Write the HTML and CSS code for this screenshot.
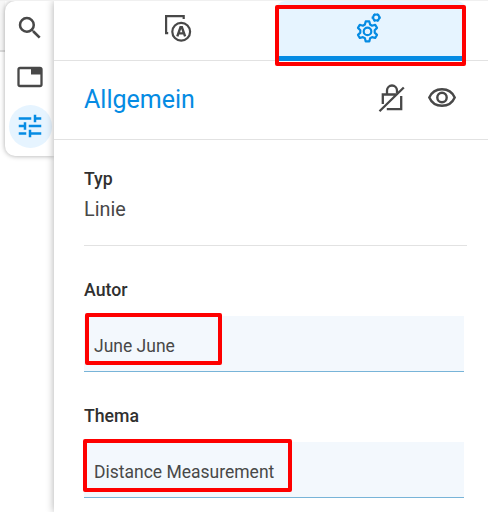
FILE: index.html
```html
<!DOCTYPE html>
<html lang="de">
<head>
<meta charset="utf-8">
<title>Allgemein</title>
<link rel="stylesheet" href="styles.css">
</head>
<body>
<div class="app">
  <aside class="gutter">
    <div class="canvas-edge"></div>
    <nav class="rail">
      <button class="rail-item" aria-label="Suche"><svg width="30" height="30" viewBox="0 0 24 24"><path fill="currentColor" d="M15.500 14h-.79l-.28-.27A6.470 6.470 0 0 0 16 9.500 6.500 6.500 0 1 0 9.500 16c1.610 0 3.090-.59 4.230-1.570l.27.28v.79l5 4.990L20.490 19zm-6 0a4.500 4.500 0 1 1 0-9 4.500 4.500 0 0 1 0 9z"/></svg></button>
      <button class="rail-item" aria-label="Ansichten"><svg width="28" height="28" viewBox="0 0 28 28"><rect x="2.500" y="5" width="23" height="18" rx="1.600" fill="none" stroke="currentColor" stroke-width="2.300"/><path fill="currentColor" d="M15 5h10.500v6.500H15z"/></svg></button>
      <button class="rail-item active" aria-label="Eigenschaften"><svg width="30" height="30" viewBox="0 0 24 24"><path fill="currentColor" d="M3 17v2h6v-2H3zM3 5v2h10V5H3zm10 16v-2h8v-2h-8v-2h-2v6h2zM7 9v2H3v2h4v2h2V9H7zm14 4v-2H11v2h10zm-6-4h2V7h4V5h-4V3h-2v6z"/></svg></button>
    </nav>
  </aside>
  <main class="panel">
    <div class="tabs">
      <button class="tab" aria-label="Darstellung"><svg width="30" height="30" viewBox="0 0 30 30" fill="none" stroke="currentColor"><path stroke-width="2.200" d="M6.200 21.200H4.100V4.100h17.600v3"/><circle cx="19.200" cy="19.700" r="8.900" stroke-width="2.200"/><path stroke-width="2.400" d="M15.300 24.300l3.200-9h1.400l3.200 9M16.500 21.400h5.400"/></svg></button>
      <button class="tab selected" aria-label="Einstellungen"><svg width="30" height="36" viewBox="0 0 30 36" fill="none" stroke="currentColor" stroke-linejoin="round"><path stroke-width="2.200" d="M11.700 13.400h3.600l.8 3.100 2 1.200 3.100-.9 1.800 3.100-2.300 2.300v2.400l2.300 2.300-1.800 3.100-3.100-.9-2 1.200-.8 3.100h-3.600l-.8-3.100-2-1.200-3.100.9-1.800-3.100 2.300-2.300v-2.400l-2.300-2.300 1.800-3.100 3.100.9 2-1.200z"/><circle cx="13.500" cy="23.400" r="3.800" stroke-width="2.200"/><circle cx="22.200" cy="9.600" r="3" stroke-width="2"/><path stroke-width="2.200" d="M20 5.700l.9 1.500M24.400 5.700l-.9 1.500M17.600 9.600h1.500M25.300 9.600h1.500M20 13.500l.9-1.500M24.400 13.500l-.9-1.500"/></svg><span class="mark mark-tab"></span></button>
    </div>
    <header class="heading">
      <h1>Allgemein</h1>
      <button class="action" aria-label="Entsperrt"><svg width="30" height="30" viewBox="0 0 30 30" fill="none" stroke="currentColor" stroke-width="2.300"><path d="M5.800 21V11.500H20M24.200 13v13.200H9.800M10 11V7.500a5 5 0 0 1 10 0V10M2.500 28.300L26.800 4.500"/></svg></button>
      <button class="action" aria-label="Sichtbar"><svg width="30" height="30" viewBox="0 0 30 30" fill="none" stroke="currentColor" stroke-width="2.400"><path d="M2.300 14.500C4.600 9.200 9.500 6.200 15 6.200s10.400 3 12.700 8.300C25.400 19.800 20.500 22.800 15 22.800S4.600 19.800 2.300 14.500z"/><circle cx="15" cy="14.500" r="4.700"/></svg></button>
    </header>
    <section class="content">
      <div class="type">
        <h2>Typ</h2>
        <p>Linie</p>
      </div>
      <div class="group">
        <h2>Autor</h2>
        <div class="field">June June<span class="mark mark-author"></span></div>
      </div>
      <div class="group">
        <h2>Thema</h2>
        <div class="field">Distance Measurement<span class="mark mark-topic"></span></div>
      </div>
    </section>
  </main>
</div>
</body>
</html>
```

FILE: styles.css
```css
* { box-sizing: border-box; }
body { margin: 0; font-family: Roboto, sans-serif; color: #484848; background: #fff; overflow: hidden; }
button { border: 0; padding: 0; background: none; color: inherit; font: inherit; }
svg { display: block; flex: none; }
h1, h2, p { margin: 0; }

.app { display: flex; height: 512px; border-top: 1px solid #f0f0f0; }

.gutter { display: flex; width: 54px; flex: none; align-items: flex-start; clip-path: inset(0 0 -20px 0); }
.canvas-edge { width: 5px; height: 51px; background: #f7f7f7; border-bottom: 2px solid #dcdcdc; }
.rail {
  display: flex; flex-direction: column; align-items: center; gap: 5px;
  width: 49px; height: 155px; padding: 5px 0 0 1px;
  background: #fff; border-radius: 10px 0 0 10px;
  box-shadow: 0 0 5px rgba(0, 0, 0, .35);
}
.rail-item { display: flex; align-items: center; justify-content: center; width: 44px; height: 44px; }
.rail-item.active { width: 43px; height: 43px; margin: 1px 0 0 1px; padding: 0 2px 2px 0; border-radius: 50%; background: #e6f4ff; color: #058be3; }

.panel { position: relative; flex: 1; background: #fff; box-shadow: 0 0 8px rgba(0, 0, 0, .32); clip-path: inset(0 0 0 -14px); }
.tabs { display: flex; height: 60px; padding-left: 30px; border-bottom: 1px solid #e2e2e2; }
.tab { display: flex; justify-content: center; width: 189px; height: 60px; padding-top: 11px; padding-right: 4px; }
.tab.selected {
  position: relative; width: 190px; margin-left: 3px; padding-top: 7px; padding-right: 4px;
  background: #e6f4ff; border-bottom: 5px solid #058be3; border-radius: 9px 9px 0 0; color: #058be3;
}
.heading { display: flex; align-items: center; height: 79px; padding: 0 31px 0 30px; border-bottom: 1px solid #e2e2e2; }
h1 { margin-right: auto; font-size: 25px; font-weight: 400; line-height: 30px; color: #058be3; }
.action { margin: -4px 3px 0 17px; }
.action:last-child { margin-right: 0; }
.heading { padding-right: 34px; }

.content { padding: 27px 24px 0 30px; }
h2 { font-size: 17.700px; line-height: 24px; font-weight: 500; color: #303030; }
.type { width: 383px; height: 79px; border-bottom: 1px solid #e2e2e2; }
.type p { margin-top: 4px; font-size: 19.800px; line-height: 30px; }
.group { margin-top: 32px; }
.field {
  position: relative; width: 380px; height: 56px; margin-top: 14px; padding: 18px 10px 0;
  background: #f3f8fd; border-bottom: 1px solid #78b4d8; font-size: 17.500px; line-height: 24px;
}

.mark { position: absolute; border: 4px solid #fe0000; border-radius: 2px; }
.mark-tab { left: -1px; top: 4px; width: 191px; height: 61px; }
.mark-author { left: 1px; top: -3px; width: 137px; height: 52px; }
.mark-topic { left: -1px; top: -3px; width: 209px; height: 53px; }
```
